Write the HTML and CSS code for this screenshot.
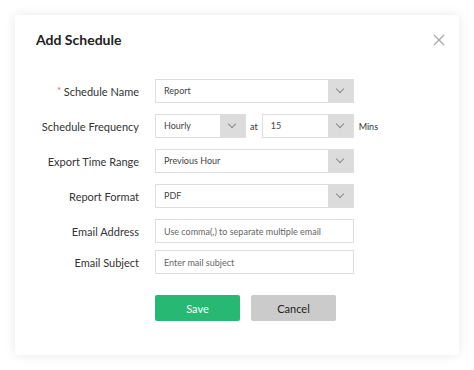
FILE: index.html
```html
<!DOCTYPE html>
<html lang="en">
<head>
  <meta charset="UTF-8" />
  <meta name="viewport" content="width=device-width, initial-scale=1.0" />
  <title>Add Schedule</title>
  <link rel="stylesheet" href="styles.css">
</head>
<body>
  <div class="modal">
    <div class="modal-head">
      <h2>Add Schedule</h2>
      <span class="close">
        <svg width="12" height="12" viewBox="0 0 12 12"><path d="M1 1 L11 11 M11 1 L1 11" stroke="#a9a9a9" stroke-width="1.4" fill="none"/></svg>
      </span>
    </div>

    <div class="form">
      <div class="row">
        <label><span class="req">*</span> Schedule Name</label>
        <div class="select wide"><span>Report</span><i class="arrow"></i></div>
      </div>
      <div class="row">
        <label>Schedule Frequency</label>
        <div class="inline">
          <div class="select freq"><span>Hourly</span><i class="arrow"></i></div>
          <span class="word">at</span>
          <div class="select mins"><span>15</span><i class="arrow"></i></div>
          <span class="word unit">Mins</span>
        </div>
      </div>
      <div class="row">
        <label>Export Time Range</label>
        <div class="select wide"><span>Previous Hour</span><i class="arrow"></i></div>
      </div>
      <div class="row">
        <label>Report Format</label>
        <div class="select wide"><span>PDF</span><i class="arrow"></i></div>
      </div>
      <div class="row text-row">
        <label>Email Address</label>
        <input type="text" placeholder="Use comma(,) to separate multiple email">
      </div>
      <div class="row text-row">
        <label>Email Subject</label>
        <input type="text" placeholder="Enter mail subject">
      </div>
      <div class="actions">
        <button class="save">Save</button>
        <button class="cancel">Cancel</button>
      </div>
    </div>
  </div>
</body>
</html>
```

FILE: styles.css
```css
* {
  box-sizing: border-box;
  font-family: 'Lato', 'Liberation Sans', sans-serif;
}
body {
  margin: 0;
  padding: 15px;
  background: #fff;
}
.modal {
  width: 444px;
  height: 340px;
  background: #fff;
  border-radius: 3px;
  box-shadow: 0 0 12px rgba(0, 0, 0, 0.09);
  padding: 15px 14px 0 21px;
}
.modal-head {
  display: flex;
  justify-content: space-between;
  align-items: center;
  height: 20px;
}
h2 {
  margin: 0;
  font-size: 14px;
  line-height: 20px;
  font-weight: 700;
  color: #222;
}
.close {
  display: flex;
}
.form {
  margin-top: 29px;
  margin-left: -21px;
}
.row {
  display: flex;
  align-items: center;
  margin-bottom: 11px;
}
.row.text-row {
  margin-bottom: 7px;
}
.row label {
  width: 124px;
  margin-right: 16px;
  text-align: right;
  font-size: 11px;
  color: #333;
}
.req {
  color: #e5534b;
  font-size: 9px;
  vertical-align: top;
}
.select {
  display: flex;
  height: 24px;
  border: 1px solid #dedede;
  background: #fff;
}
.select span {
  flex: 1;
  padding-left: 8px;
  font-size: 9px;
  line-height: 22px;
  color: #444;
}
.select .arrow {
  width: 25px;
  background: #dcdcdc;
  position: relative;
}
.select .arrow::after {
  content: '';
  position: absolute;
  left: 9px;
  top: 6px;
  width: 5px;
  height: 5px;
  border-right: 1.2px solid #8a8a8a;
  border-bottom: 1.2px solid #8a8a8a;
  transform: rotate(45deg);
}
.wide {
  width: 199px;
}
.freq {
  width: 91px;
}
.mins {
  width: 92px;
}
.inline {
  display: flex;
  align-items: center;
}
.word {
  font-size: 9px;
  color: #333;
  margin: 0 4px;
}
.word.unit {
  margin-left: 5px;
}
input {
  width: 199px;
  height: 24px;
  border: 1px solid #dedede;
  padding: 0 8px;
  font-size: 9px;
  outline: none;
}
input::placeholder {
  color: #666;
}
.actions {
  display: flex;
  gap: 11px;
  margin-left: 140px;
  margin-top: 21px;
}
button {
  width: 85px;
  height: 26px;
  border: none;
  border-radius: 2px;
  font-size: 11px;
  cursor: pointer;
}
.save {
  background: #27b874;
  color: #fff;
}
.cancel {
  background: #cbcbcb;
  color: #222;
}
```
